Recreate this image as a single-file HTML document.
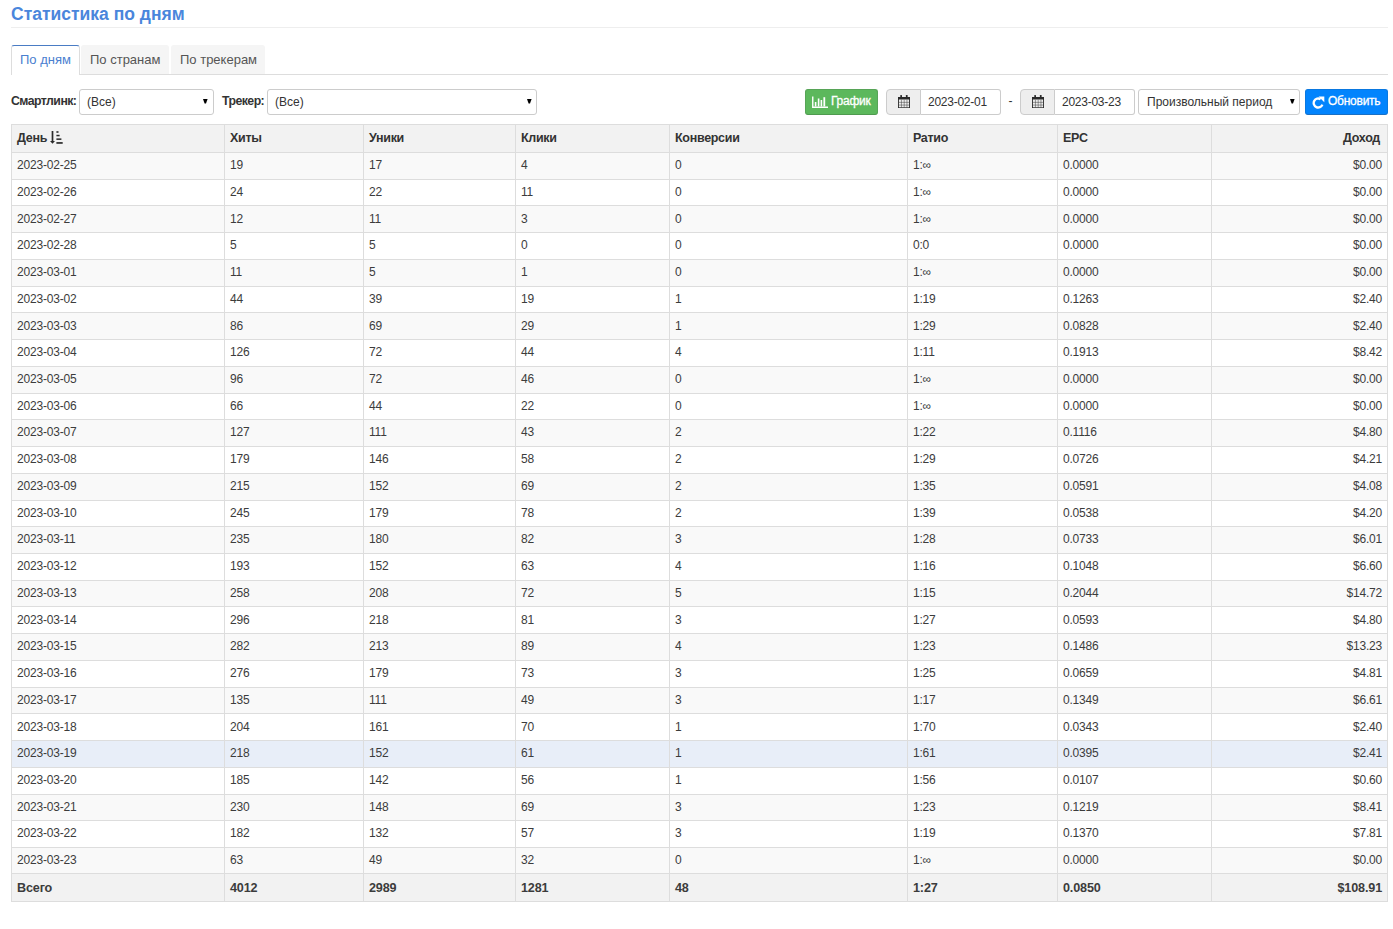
<!DOCTYPE html>
<html><head><meta charset="utf-8">
<style>
*{box-sizing:border-box;margin:0;padding:0}
html,body{width:1393px;height:929px;background:#fff;overflow:hidden}
body{font-family:"Liberation Sans",sans-serif;color:#333;font-size:13px;position:relative}
.title{position:absolute;left:11px;top:3px;font-size:17.5px;font-weight:bold;color:#4a86dc;line-height:22px;white-space:nowrap}
.hr1{position:absolute;left:11px;top:27px;width:1377px;height:1px;background:#eee}
.tabline{position:absolute;left:11px;top:74px;width:1377px;height:1px;background:#ddd}
.tab{position:absolute;top:45px;height:29px;background:#f5f5f5;border-radius:3px 3px 0 0;color:#555;font-size:13px;line-height:30px;white-space:nowrap}
.tab.active{background:#fff;border:1px solid #ddd;border-top:1px solid #4a7cc4;border-bottom:none;height:30px;color:#4a80d0;line-height:28px}
.lbl{position:absolute;top:89px;height:26px;line-height:25px;font-size:12.3px;font-weight:bold;color:#333;white-space:nowrap;letter-spacing:-0.55px}
.sel{position:absolute;top:89px;height:26px;border:1px solid #ccc;border-radius:3px;background:#fff;font-size:12px;line-height:24px;padding-left:7px;color:#333;white-space:nowrap}
.sel svg{position:absolute;top:9px}
.btn{position:absolute;top:89px;height:26px;border-radius:3px;color:#fff;font-size:12px;line-height:22px;white-space:nowrap;-webkit-text-stroke:0.3px #fff;letter-spacing:-0.25px}
.btn.green{background:#5cb85c;border:1px solid #57a457;border-bottom-color:#4f9a4f}
.btn.blue{background:#0284fd;border:1px solid #0a78e0;border-bottom-color:#1a70c4}
.addon{position:absolute;top:89px;height:26px;width:35px;background:#eee;border:1px solid #ccc;border-radius:4px 0 0 4px}
.inp{position:absolute;top:89px;height:26px;border:1px solid #ccc;border-left:none;border-radius:0 3px 3px 0;background:#fff;font-size:12px;line-height:24px;padding-left:7px;color:#333;letter-spacing:-0.25px}
.dash{position:absolute;top:89px;line-height:24px;font-size:12px;color:#333}
table{position:absolute;left:11px;top:124px;width:1376px;border-collapse:collapse;table-layout:fixed}
td,th{border:1px solid #ddd;padding:0 5px 1.5px;font-size:12px;letter-spacing:-0.2px;text-align:left;white-space:nowrap;overflow:hidden}
th{background:#f2f2f2;font-weight:bold;height:28px;color:#333;font-size:12.5px;letter-spacing:-0.3px}
td{height:26.74px;color:#3c3c3c}
tr.odd td{background:#f9f9f9}
tr.even td{background:#fff}
tr.hl td{background:#e8eef8}
tr.last td{height:26.2px}
td.r{text-align:right}
th.r{text-align:right;padding-right:7px}
tfoot td{background:#f2f2f2;font-weight:bold;height:28px;font-size:12.6px;letter-spacing:-0.15px;padding:1px 5px 0}
</style></head><body>
<div class="title">Статистика по дням</div>
<div class="hr1"></div>
<div class="tabline"></div>
<div class="tab active" style="left:11px;width:69px;padding-left:8px">По дням</div>
<div class="tab" style="left:81px;width:88px;padding-left:9px">По странам</div>
<div class="tab" style="left:171px;width:94px;padding-left:9px">По трекерам</div>

<div class="lbl" style="left:11px">Смартлинк:</div>
<div class="sel" style="left:79px;width:135px">(Все)<svg width="5" height="5" viewBox="0 0 5 5" style="left:123px"><path d="M0 0H4.6L3 4.6H1.6Z" fill="#000"/></svg></div>
<div class="lbl" style="left:222px">Трекер:</div>
<div class="sel" style="left:267px;width:270px">(Все)<svg width="5" height="5" viewBox="0 0 5 5" style="left:259px"><path d="M0 0H4.6L3 4.6H1.6Z" fill="#000"/></svg></div>

<div class="btn green" style="left:805px;width:73px">
<svg width="17" height="12" viewBox="0 0 17 12" style="position:absolute;left:6px;top:6px"><path d="M0.75 0.5V11.25H16" stroke="#fff" stroke-width="1.4" fill="none"/><rect x="2.8" y="6" width="1.6" height="4.5" fill="#fff"/><rect x="5.8" y="2.5" width="1.6" height="8" fill="#fff"/><rect x="8.6" y="4" width="1.6" height="6.5" fill="#fff"/><rect x="11.4" y="1.2" width="1.8" height="9.3" fill="#fff"/></svg>
<span style="position:absolute;left:25px">График</span></div>

<div class="addon" style="left:886px"><svg width="12" height="13" viewBox="0 0 12 13" style="position:absolute;left:11px;top:5px"><rect x="0.45" y="2.45" width="11.1" height="10.3" fill="none" stroke="#2a2a2a" stroke-width="0.9"/><rect x="0" y="2" width="12" height="2.5" fill="#2a2a2a"/><rect x="2.3" y="0" width="1.7" height="3" rx="0.5" fill="#2a2a2a"/><rect x="7.9" y="0" width="1.7" height="3" rx="0.5" fill="#2a2a2a"/><path d="M0.5 7.35H11.5M0.5 10.05H11.5M3.45 4.7V12.6M6.2 4.7V12.6M8.95 4.7V12.6" stroke="#3a3a3a" stroke-width="0.5"/></svg></div>
<div class="inp" style="left:921px;width:80px">2023-02-01</div>
<div class="dash" style="left:1008.5px">-</div>
<div class="addon" style="left:1020px"><svg width="12" height="13" viewBox="0 0 12 13" style="position:absolute;left:11px;top:5px"><rect x="0.45" y="2.45" width="11.1" height="10.3" fill="none" stroke="#2a2a2a" stroke-width="0.9"/><rect x="0" y="2" width="12" height="2.5" fill="#2a2a2a"/><rect x="2.3" y="0" width="1.7" height="3" rx="0.5" fill="#2a2a2a"/><rect x="7.9" y="0" width="1.7" height="3" rx="0.5" fill="#2a2a2a"/><path d="M0.5 7.35H11.5M0.5 10.05H11.5M3.45 4.7V12.6M6.2 4.7V12.6M8.95 4.7V12.6" stroke="#3a3a3a" stroke-width="0.5"/></svg></div>
<div class="inp" style="left:1055px;width:80px">2023-03-23</div>
<div class="sel" style="left:1138px;width:162px;padding-left:8px">Произвольный период<svg width="5" height="5" viewBox="0 0 5 5" style="left:151px"><path d="M0 0H4.6L3 4.6H1.6Z" fill="#000"/></svg></div>
<div class="btn blue" style="left:1305px;width:83px">
<svg width="13" height="13" viewBox="0 0 13 13" style="position:absolute;left:6px;top:5.5px"><path d="M10.4 8.6A4.5 4.5 0 1 1 8.6 3.2" stroke="#fff" stroke-width="2.3" fill="none"/><path d="M6.6 0.6L12.3 0.6L12.3 6.3Z" fill="#fff"/></svg>
<span style="position:absolute;left:22px">Обновить</span></div>

<table>
<colgroup><col style="width:213px"><col style="width:139px"><col style="width:152px"><col style="width:154px"><col style="width:238px"><col style="width:150px"><col style="width:154px"><col style="width:176px"></colgroup>
<thead><tr><th>День <svg width="14" height="14" viewBox="0 0 14 14" style="vertical-align:-3px;margin-left:1px;position:relative;left:-1px"><path d="M2.5 0V10.6" stroke="#2b2b2b" stroke-width="1.7"/><path d="M0 10L5 10L2.5 12.8Z" fill="#2b2b2b"/><rect x="6.4" y="0.2" width="2.1" height="1.6" fill="#2b2b2b"/><rect x="6.4" y="3.8" width="3.2" height="1.5" fill="#2b2b2b"/><rect x="6.4" y="7.4" width="5" height="1.5" fill="#2b2b2b"/><rect x="6.4" y="11.1" width="6.3" height="1.7" fill="#2b2b2b"/></svg></th><th>Хиты</th><th>Уники</th><th>Клики</th><th>Конверсии</th><th>Ратио</th><th>EPC</th><th class="r">Доход</th></tr></thead>
<tbody>
<tr class="odd"><td>2023-02-25</td><td>19</td><td>17</td><td>4</td><td>0</td><td>1:∞</td><td>0.0000</td><td class="r">$0.00</td></tr>
<tr class="even"><td>2023-02-26</td><td>24</td><td>22</td><td>11</td><td>0</td><td>1:∞</td><td>0.0000</td><td class="r">$0.00</td></tr>
<tr class="odd"><td>2023-02-27</td><td>12</td><td>11</td><td>3</td><td>0</td><td>1:∞</td><td>0.0000</td><td class="r">$0.00</td></tr>
<tr class="even"><td>2023-02-28</td><td>5</td><td>5</td><td>0</td><td>0</td><td>0:0</td><td>0.0000</td><td class="r">$0.00</td></tr>
<tr class="odd"><td>2023-03-01</td><td>11</td><td>5</td><td>1</td><td>0</td><td>1:∞</td><td>0.0000</td><td class="r">$0.00</td></tr>
<tr class="even"><td>2023-03-02</td><td>44</td><td>39</td><td>19</td><td>1</td><td>1:19</td><td>0.1263</td><td class="r">$2.40</td></tr>
<tr class="odd"><td>2023-03-03</td><td>86</td><td>69</td><td>29</td><td>1</td><td>1:29</td><td>0.0828</td><td class="r">$2.40</td></tr>
<tr class="even"><td>2023-03-04</td><td>126</td><td>72</td><td>44</td><td>4</td><td>1:11</td><td>0.1913</td><td class="r">$8.42</td></tr>
<tr class="odd"><td>2023-03-05</td><td>96</td><td>72</td><td>46</td><td>0</td><td>1:∞</td><td>0.0000</td><td class="r">$0.00</td></tr>
<tr class="even"><td>2023-03-06</td><td>66</td><td>44</td><td>22</td><td>0</td><td>1:∞</td><td>0.0000</td><td class="r">$0.00</td></tr>
<tr class="odd"><td>2023-03-07</td><td>127</td><td>111</td><td>43</td><td>2</td><td>1:22</td><td>0.1116</td><td class="r">$4.80</td></tr>
<tr class="even"><td>2023-03-08</td><td>179</td><td>146</td><td>58</td><td>2</td><td>1:29</td><td>0.0726</td><td class="r">$4.21</td></tr>
<tr class="odd"><td>2023-03-09</td><td>215</td><td>152</td><td>69</td><td>2</td><td>1:35</td><td>0.0591</td><td class="r">$4.08</td></tr>
<tr class="even"><td>2023-03-10</td><td>245</td><td>179</td><td>78</td><td>2</td><td>1:39</td><td>0.0538</td><td class="r">$4.20</td></tr>
<tr class="odd"><td>2023-03-11</td><td>235</td><td>180</td><td>82</td><td>3</td><td>1:28</td><td>0.0733</td><td class="r">$6.01</td></tr>
<tr class="even"><td>2023-03-12</td><td>193</td><td>152</td><td>63</td><td>4</td><td>1:16</td><td>0.1048</td><td class="r">$6.60</td></tr>
<tr class="odd"><td>2023-03-13</td><td>258</td><td>208</td><td>72</td><td>5</td><td>1:15</td><td>0.2044</td><td class="r">$14.72</td></tr>
<tr class="even"><td>2023-03-14</td><td>296</td><td>218</td><td>81</td><td>3</td><td>1:27</td><td>0.0593</td><td class="r">$4.80</td></tr>
<tr class="odd"><td>2023-03-15</td><td>282</td><td>213</td><td>89</td><td>4</td><td>1:23</td><td>0.1486</td><td class="r">$13.23</td></tr>
<tr class="even"><td>2023-03-16</td><td>276</td><td>179</td><td>73</td><td>3</td><td>1:25</td><td>0.0659</td><td class="r">$4.81</td></tr>
<tr class="odd"><td>2023-03-17</td><td>135</td><td>111</td><td>49</td><td>3</td><td>1:17</td><td>0.1349</td><td class="r">$6.61</td></tr>
<tr class="even"><td>2023-03-18</td><td>204</td><td>161</td><td>70</td><td>1</td><td>1:70</td><td>0.0343</td><td class="r">$2.40</td></tr>
<tr class="hl"><td>2023-03-19</td><td>218</td><td>152</td><td>61</td><td>1</td><td>1:61</td><td>0.0395</td><td class="r">$2.41</td></tr>
<tr class="even"><td>2023-03-20</td><td>185</td><td>142</td><td>56</td><td>1</td><td>1:56</td><td>0.0107</td><td class="r">$0.60</td></tr>
<tr class="odd"><td>2023-03-21</td><td>230</td><td>148</td><td>69</td><td>3</td><td>1:23</td><td>0.1219</td><td class="r">$8.41</td></tr>
<tr class="even"><td>2023-03-22</td><td>182</td><td>132</td><td>57</td><td>3</td><td>1:19</td><td>0.1370</td><td class="r">$7.81</td></tr>
<tr class="odd last"><td>2023-03-23</td><td>63</td><td>49</td><td>32</td><td>0</td><td>1:∞</td><td>0.0000</td><td class="r">$0.00</td></tr></tbody>
<tfoot><tr><td>Всего</td><td>4012</td><td>2989</td><td>1281</td><td>48</td><td>1:27</td><td>0.0850</td><td class="r">$108.91</td></tr></tfoot>
</table>
</body></html>
